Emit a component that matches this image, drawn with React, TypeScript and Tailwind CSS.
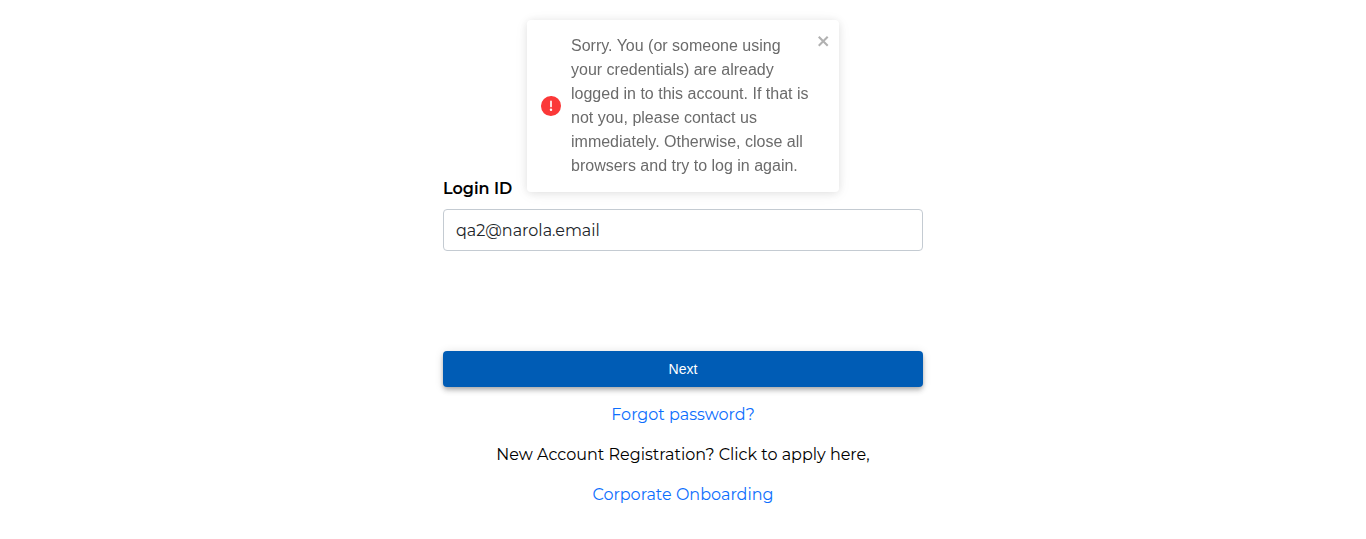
import { useState } from "react";

function ErrorToast({ message, onClose }: { message: string; onClose: () => void }) {
  return (
    <div
      role="alert"
      className="fixed top-5 left-1/2 flex w-[312px] -translate-x-1/2 items-start rounded bg-white p-2 font-['Liberation_Sans',Arial,sans-serif] text-base text-[#6b6b6b] shadow-[0_1px_10px_0_rgba(0,0,0,0.1),0_2px_15px_0_rgba(0,0,0,0.05)]"
    >
      <div className="flex flex-1 items-center gap-2.5 p-1.5">
        <svg viewBox="0 0 24 24" className="size-5 shrink-0 fill-[#fb3838]" aria-hidden="true">
          <path d="M11.983 0a12.206 12.206 0 00-8.51 3.653A11.8 11.8 0 000 12.207 11.779 11.779 0 0011.8 24h.214A12.111 12.111 0 0024 11.791 11.766 11.766 0 0011.983 0zM10.5 16.542a1.476 1.476 0 011.449-1.53h.027a1.527 1.527 0 011.523 1.47 1.475 1.475 0 01-1.449 1.53h-.027a1.529 1.529 0 01-1.523-1.47zM11 12.5v-6a1 1 0 012 0v6a1 1 0 11-2 0z" />
        </svg>
        <p className="flex-1">{message}</p>
      </div>
      <button type="button" aria-label="close" onClick={onClose} className="pt-[5px] text-black opacity-30">
        <svg viewBox="0 0 14 16" className="h-4 w-3.5 fill-current" aria-hidden="true">
          <path
            fillRule="evenodd"
            d="M7.71 8.23l3.75 3.75-1.48 1.48-3.75-3.75-3.75 3.75L1 11.98l3.75-3.75L1 4.48 2.48 3l3.75 3.75L9.98 3l1.48 1.48-3.75 3.75z"
          />
        </svg>
      </button>
    </div>
  );
}

export default function App() {
  const [loginId, setLoginId] = useState("qa2@narola.email");
  const [toastOpen, setToastOpen] = useState(true);

  return (
    <main className="bg-white px-4 pt-[177px] pb-8 font-[Montserrat,Inter,sans-serif] text-base text-black">
      <form className="mx-auto flex max-w-[480px] flex-col" onSubmit={(e) => e.preventDefault()}>
        <label htmlFor="login-id" className="mb-2 font-semibold">
          Login ID
        </label>
        <input
          id="login-id"
          type="text"
          value={loginId}
          onChange={(e) => setLoginId(e.target.value)}
          className="h-[42px] rounded border border-[#c4cbd2] bg-white px-3 text-[#212529]"
        />
        <button
          type="submit"
          className="mt-25 h-9 rounded bg-[#005cb5] font-['Liberation_Sans',Arial,sans-serif] text-sm text-white shadow-[0_2px_4px_-1px_rgba(0,0,0,0.2),0_4px_5px_0_rgba(0,0,0,0.14),0_1px_10px_0_rgba(0,0,0,0.12)]"
        >
          Next
        </button>
        <div className="mt-4 flex flex-col items-center gap-4 text-center">
          <a href="#forgot-password" className="text-[#0d6efd]">Forgot password?</a>
          <p>New Account Registration? Click to apply here,</p>
          <a href="#corporate-onboarding" className="text-[#0d6efd]">Corporate Onboarding</a>
        </div>
      </form>
      {toastOpen && (
        <ErrorToast
          message="Sorry. You (or someone using your credentials) are already logged in to this account. If that is not you, please contact us immediately. Otherwise, close all browsers and try to log in again."
          onClose={() => setToastOpen(false)}
        />
      )}
    </main>
  );
}
